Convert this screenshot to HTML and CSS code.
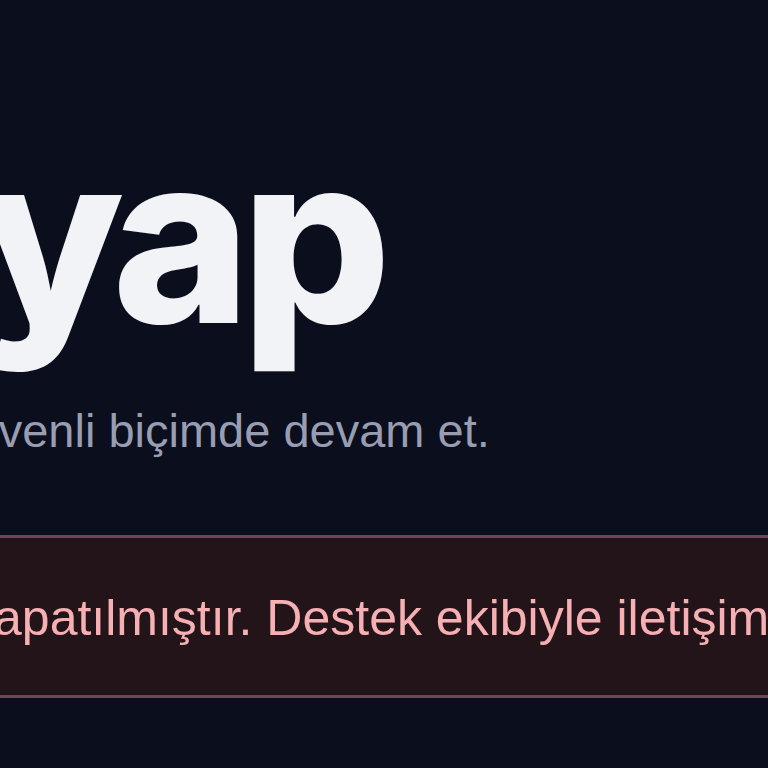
FILE: index.html
```html
<!DOCTYPE html>
<html lang="tr">
<head>
<meta charset="utf-8">
<link rel="stylesheet" href="styles.css">
</head>
<body>
<main class="auth">
  <h1 class="auth-title">Giriş yap</h1>
  <p class="auth-sub">Güvenli biçimde devam et.</p>
  <div class="alert" role="alert"><p class="alert-text">Hesabınız kapatılmıştır. Destek ekibiyle iletişime geçin.</p></div>
</main>
</body>
</html>
```
FILE: styles.css
```css
html, body {
  margin: 0;
  padding: 0;
  background: #0b0e1c;
  overflow: hidden;
}
body {
  font-family: "Liberation Sans", Arial, sans-serif;
  width: 768px;
  height: 768px;
}
.auth {
  padding-top: 120px;
  width: 768px;
}
.auth-title {
  margin: 0;
  font-family: Inter, "Liberation Sans", sans-serif;
  font-size: 235px;
  line-height: 1;
  font-weight: 800;
  letter-spacing: -0.04em;
  color: #f2f3f7;
  white-space: nowrap;
  text-indent: -560px;
}
.auth-sub {
  margin: 48px 0 0;
  font-size: 47px;
  line-height: 56px;
  color: #989db2;
  white-space: nowrap;
  text-indent: -64px;
}
.alert {
  margin: 76px 0 0 -100px;
  width: 2000px;
  box-sizing: border-box;
  border: 3px solid #6b4656;
  background: #231419;
  padding: 50px 0 47px;
}
.alert-text {
  margin: 0;
  color: #f6afb3;
  font-size: 50px;
  line-height: 60px;
  white-space: nowrap;
  text-indent: -173px;
}
```
